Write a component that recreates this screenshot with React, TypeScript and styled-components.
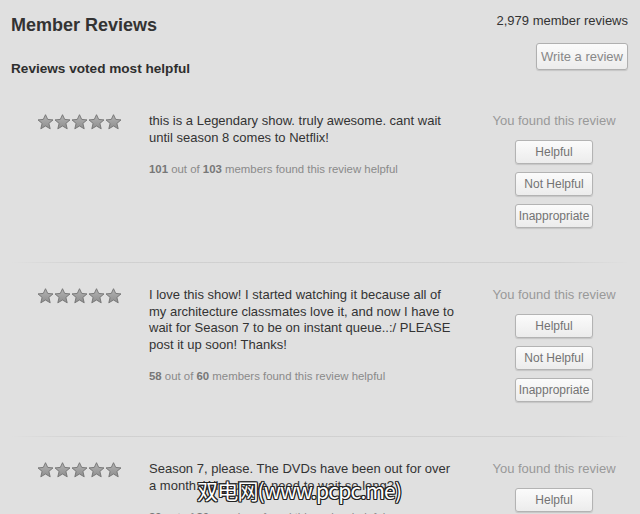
import React from "react";
import styled, { createGlobalStyle } from "styled-components";

const GlobalStyle = createGlobalStyle`
  html, body { margin: 0; padding: 0; background: #e0e0e0; }
  body { font-family: "Liberation Sans", Arial, sans-serif; }
`;

const Page = styled.div`
  position: relative;
  width: 640px;
  height: 514px;
  overflow: hidden;
  background: #e0e0e0;
  font-family: "Liberation Sans", Arial, sans-serif;
`;

const Header = styled.header`
  display: flex;
  justify-content: space-between;
  align-items: flex-start;
  padding: 13px 12px 0 11px;
`;

const HeaderLeft = styled.div`
  display: flex;
  flex-direction: column;
`;

const Title = styled.h1`
  margin: 1px 0 0 0;
  font-size: 18px;
  line-height: 22px;
  font-weight: bold;
  color: #333;
`;

const SubTitle = styled.h2`
  margin: 24.5px 0 0 0;
  font-size: 13.6px;
  line-height: 16px;
  font-weight: bold;
  color: #2e2e2e;
`;

const HeaderRight = styled.div`
  display: flex;
  flex-direction: column;
  align-items: flex-end;
`;

const ReviewCount = styled.div`
  font-size: 13px;
  line-height: 16px;
  color: #333;
`;

const WriteButton = styled.button`
  margin-top: 14px;
  height: 27px;
  padding: 0 4px;
  font-family: inherit;
  font-size: 13px;
  color: #888;
  background: linear-gradient(#fbfbfb, #ececec);
  border: 1px solid #b0b0b0;
  border-radius: 3px;
  box-shadow: 0 1px 1px rgba(0, 0, 0, 0.12);
`;

const ReviewList = styled.div`
  margin-top: 12.5px;
`;

const ReviewRow = styled.section`
  display: grid;
  grid-template-columns: 88px 311px 140px;
  column-gap: 24px;
  padding: 24px 0 35px 37px;
  position: relative;
  &::after {
    content: "";
    position: absolute;
    left: 10px;
    right: 10px;
    bottom: 0;
    height: 1px;
    background: linear-gradient(
      to right,
      rgba(0, 0, 0, 0),
      rgba(0, 0, 0, 0.07) 12%,
      rgba(0, 0, 0, 0.07) 88%,
      rgba(0, 0, 0, 0)
    );
  }
`;

const Stars = styled.div`
  display: flex;
  margin-top: 1px;
`;

const Body = styled.div`
  display: flex;
  flex-direction: column;
`;

const ReviewText = styled.p`
  margin: 0;
  font-size: 13px;
  line-height: 16.5px;
  color: #333;
`;

const Helpfulness = styled.div`
  margin-top: 16px;
  font-size: 11.4px;
  line-height: 14px;
  color: #8a8a8a;
  b {
    color: #777;
  }
`;

const Feedback = styled.div`
  display: flex;
  flex-direction: column;
  align-items: center;
`;

const FoundLabel = styled.div`
  font-size: 13px;
  line-height: 16px;
  color: #999;
  white-space: nowrap;
`;

const VoteButtons = styled.div`
  display: flex;
  flex-direction: column;
  gap: 8px;
  margin-top: 11px;
`;

const VoteButton = styled.button`
  width: 78px;
  height: 24px;
  padding: 0;
  font-family: inherit;
  font-size: 12px;
  color: #737373;
  background: linear-gradient(#fbfbfb, #ececec);
  border: 1px solid #b3b3b3;
  border-radius: 3px;
  box-shadow: 0 1px 1px rgba(0, 0, 0, 0.12);
`;

const Watermark = styled.div`
  position: absolute;
  left: 197px;
  top: 476px;
  font-family: "Noto Sans CJK SC", "Liberation Sans", sans-serif;
  font-size: 21px;
  line-height: 28px;
  letter-spacing: -0.8px;
  color: #fff;
  white-space: nowrap;
  text-shadow: -1px -1px 0 #222, 1px -1px 0 #222, -1px 1px 0 #222,
    1px 1px 0 #222, 0 1px 0 #222, 0 -1px 0 #222, 1px 0 0 #222, -1px 0 0 #222;
`;

const Star: React.FC = () => (
  <svg width="17" height="16" viewBox="-0.5 0 17 16">
    <defs>
      <linearGradient id="sg" x1="0" y1="0" x2="0" y2="1">
        <stop offset="0" stopColor="#b4b4b4" />
        <stop offset="1" stopColor="#8e8e8e" />
      </linearGradient>
    </defs>
    <polygon
      points="8,0.7 10.2,5.4 15.5,5.9 11.4,9.4 12.7,14.8 8,12 3.3,14.8 4.6,9.4 0.5,5.9 5.8,5.4"
      fill="url(#sg)"
      stroke="#727272"
      strokeWidth="0.9"
      strokeLinejoin="round"
    />
  </svg>
);

type Review = {
  text: string;
  found: number;
  total: number;
  buttons: string[];
};

const reviews: Review[] = [
  {
    text: "this is a Legendary show. truly awesome. cant wait until season 8 comes to Netflix!",
    found: 101,
    total: 103,
    buttons: ["Helpful", "Not Helpful", "Inappropriate"],
  },
  {
    text: "I love this show! I started watching it because all of my architecture classmates love it, and now I have to wait for Season 7 to be on instant queue..:/ PLEASE post it up soon! Thanks!",
    found: 58,
    total: 60,
    buttons: ["Helpful", "Not Helpful", "Inappropriate"],
  },
  {
    text: "Season 7, please. The DVDs have been out for over a month. Why do we need to wait so long?",
    found: 29,
    total: 30,
    buttons: ["Helpful", "Not Helpful", "Inappropriate"],
  },
];

export default function App() {
  return (
    <Page>
      <GlobalStyle />
      <Header>
        <HeaderLeft>
          <Title>Member Reviews</Title>
          <SubTitle>Reviews voted most helpful</SubTitle>
        </HeaderLeft>
        <HeaderRight>
          <ReviewCount>2,979 member reviews</ReviewCount>
          <WriteButton>Write a review</WriteButton>
        </HeaderRight>
      </Header>
      <ReviewList>
        {reviews.map((r, i) => (
          <ReviewRow key={i}>
            <Stars>
              {[0, 1, 2, 3, 4].map((s) => (
                <Star key={s} />
              ))}
            </Stars>
            <Body>
              <ReviewText>{r.text}</ReviewText>
              <Helpfulness>
                <b>{r.found}</b> out of <b>{r.total}</b> members found this review helpful
              </Helpfulness>
            </Body>
            <Feedback>
              <FoundLabel>You found this review</FoundLabel>
              <VoteButtons>
                {r.buttons.map((b) => (
                  <VoteButton key={b}>{b}</VoteButton>
                ))}
              </VoteButtons>
            </Feedback>
          </ReviewRow>
        ))}
      </ReviewList>
      <Watermark>双电网(www.pcpc.me)</Watermark>
    </Page>
  );
}
